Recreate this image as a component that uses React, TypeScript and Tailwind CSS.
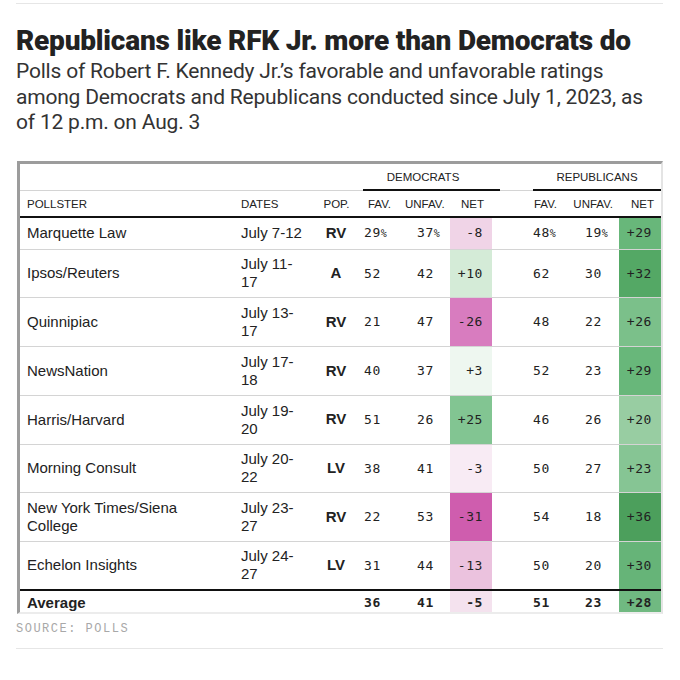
import React from "react";

type Row = {
  p: string;
  d: string;
  pop: string;
  df: string;
  du: string;
  dn: string;
  dc: string;
  rf: string;
  ru: string;
  rn: string;
  rc: string;
};

const rows: Row[] = [
  { p: "Marquette Law", d: "July 7-12", pop: "RV", df: "29", du: "37", dn: "-8", dc: "#f0d4e7", rf: "48", ru: "19", rn: "+29", rc: "#68b77a" },
  { p: "Ipsos/Reuters", d: "July 11-17", pop: "A", df: "52", du: "42", dn: "+10", dc: "#d4ebd7", rf: "62", ru: "30", rn: "+32", rc: "#54a865" },
  { p: "Quinnipiac", d: "July 13-17", pop: "RV", df: "21", du: "47", dn: "-26", dc: "#d87cbf", rf: "48", ru: "22", rn: "+26", rc: "#7bc08a" },
  { p: "NewsNation", d: "July 17-18", pop: "RV", df: "40", du: "37", dn: "+3", dc: "#eef7f0", rf: "52", ru: "23", rn: "+29", rc: "#68b77a" },
  { p: "Harris/Harvard", d: "July 19-20", pop: "RV", df: "51", du: "26", dn: "+25", dc: "#82c592", rf: "46", ru: "26", rn: "+20", rc: "#98cda2" },
  { p: "Morning Consult", d: "July 20-22", pop: "LV", df: "38", du: "41", dn: "-3", dc: "#f8ebf4", rf: "50", ru: "27", rn: "+23", rc: "#86c594" },
  { p: "New York Times/Siena College", d: "July 23-27", pop: "RV", df: "22", du: "53", dn: "-31", dc: "#cf5dae", rf: "54", ru: "18", rn: "+36", rc: "#4c9f5c" },
  { p: "Echelon Insights", d: "July 24-27", pop: "LV", df: "31", du: "44", dn: "-13", dc: "#ebc2de", rf: "50", ru: "20", rn: "+30", rc: "#66b478" },
];

const grid =
  "grid grid-cols-[213px_85px_34px_53px_45px_42px_28px_48px_51px_42px]";
const sans = "font-['Liberation_Sans',Arial,sans-serif]";
const mono = "font-['DejaVu_Sans_Mono',monospace] text-[13px] tracking-[0.6px] text-[#222]";

function Num({ v, pct }: { v: string; pct?: boolean }) {
  return (
    <span>
      {v}
      {pct ? <span className="text-[10px] tracking-normal">%</span> : null}
    </span>
  );
}

export default function App() {
  return (
    <div className="w-[680px] h-[680px] bg-white overflow-hidden">
      <div className="ml-4 w-[647px]">
        <div className="mt-[3px] h-px bg-[#e6e6e6]" />
        <h1 className="mt-[22px] font-['Roboto',sans-serif] font-black text-[28px] leading-[30px] tracking-[-0.2px] text-[#222] whitespace-nowrap">
          Republicans like RFK Jr. more than Democrats do
        </h1>
        <p className="mt-[3px] w-[640px] font-['Roboto',sans-serif] text-[21px] leading-[25.5px] tracking-[-0.2px] text-[#333]">
          Polls of Robert F. Kennedy Jr.’s favorable and unfavorable ratings among Democrats and Republicans conducted since July 1, 2023, as of 12 p.m. on Aug. 3
        </p>

        <div
          className={`mt-[25px] ml-px w-[646px] border-t-[3px] border-l-[3px] border-t-[#9c9c9c] border-l-[#9c9c9c] border-r-2 border-r-[#e4e4e4] border-b-2 border-b-[#ececec] ${sans} text-[#222]`}
        >
          {/* group header */}
          <div className={`${grid} h-[27px] border-b border-[#d4d4d4]`}>
            <div className="col-span-3" />
            <div className="col-span-3 flex flex-col justify-end">
              <div className="text-[11.5px] leading-none text-center pb-[5px] pl-[2px]">DEMOCRATS</div>
              <div className="h-[2px] bg-[#111] ml-[11px] mr-[-8px] mb-[-1px]" />
            </div>
            <div className="col-start-8 col-span-3 flex flex-col justify-end">
              <div className="text-[11.5px] leading-none text-center pb-[5px] pl-[13px]">REPUBLICANS</div>
              <div className="h-[2px] bg-[#111] ml-[13px] mb-[-1px]" />
            </div>
          </div>
          {/* column header */}
          <div className={`${grid} h-[27px] border-b-[2px] border-[#111] text-[11.5px] leading-none items-end pb-[5px]`}>
            <div className="pl-[7px]">POLLSTER</div>
            <div className="pl-[8px]">DATES</div>
            <div className="text-center pl-[3px]">POP.</div>
            <div className="text-right pr-[14px]">FAV.</div>
            <div className="text-right pr-[8px]">UNFAV.</div>
            <div className="text-right pr-[8px]">NET</div>
            <div />
            <div className="text-right pr-[11px]">FAV.</div>
            <div className="text-right pr-[6px]">UNFAV.</div>
            <div className="text-right pr-[7px]">NET</div>
          </div>
          {rows.map((r, i) => {
            const first = i === 0;
            const last = i === rows.length - 1;
            return (
              <div
                key={r.p}
                className={`${grid} ${first ? "h-[32px]" : "h-[48.75px]"} ${
                  last ? "border-b-2 border-[#111]" : "border-b border-[#d4d4d4]"
                }`}
              >
                <div className="pl-[7px] pr-[20px] flex items-center text-[15px] leading-[18px]">{r.p}</div>
                <div className="pl-[8px] flex items-center">
                  <div className="w-[64px] text-[15px] leading-[18px]">{r.d}</div>
                </div>
                <div className="flex items-center justify-center pl-[2px] text-[15px] font-bold">{r.pop}</div>
                <div className={`flex items-center pl-[12px] ${mono}`}>
                  <Num v={r.df} pct={first} />
                </div>
                <div className={`flex items-center pl-[12px] ${mono}`}>
                  <Num v={r.du} pct={first} />
                </div>
                <div className={`flex items-center justify-end pr-[9px] ${mono}`} style={{ backgroundColor: r.dc }}>
                  {r.dn}
                </div>
                <div />
                <div className={`flex items-center pl-[13px] ${mono}`}>
                  <Num v={r.rf} pct={first} />
                </div>
                <div className={`flex items-center pl-[17px] ${mono}`}>
                  <Num v={r.ru} pct={first} />
                </div>
                <div className={`flex items-center justify-end pr-[9px] ${mono}`} style={{ backgroundColor: r.rc }}>
                  {r.rn}
                </div>
              </div>
            );
          })}
          {/* average */}
          <div className={`${grid} h-[21px] overflow-hidden font-bold`}>
            <div className="pl-[7px] pt-[3px] text-[15px] leading-[18px]">Average</div>
            <div />
            <div />
            <div className={`pl-[12px] pt-[3px] ${mono} font-bold leading-[18px]`}>36</div>
            <div className={`pl-[12px] pt-[3px] ${mono} font-bold leading-[18px]`}>41</div>
            <div className={`text-right pr-[9px] pt-[3px] bg-[#f4e2ee] ${mono} font-bold leading-[18px]`}>-5</div>
            <div />
            <div className={`pl-[13px] pt-[3px] ${mono} font-bold leading-[18px]`}>51</div>
            <div className={`pl-[17px] pt-[3px] ${mono} font-bold leading-[18px]`}>23</div>
            <div className={`text-right pr-[9px] pt-[3px] bg-[#70b981] ${mono} font-bold leading-[18px]`}>+28</div>
          </div>
        </div>

        <div className="mt-[7px] font-['Liberation_Mono',monospace] text-[12px] leading-[16px] tracking-[1.5px] text-[#a8a8a8]">
          SOURCE: POLLS
        </div>
        <div className="mt-[11px] h-px bg-[#e6e6e6]" />
      </div>
    </div>
  );
}
